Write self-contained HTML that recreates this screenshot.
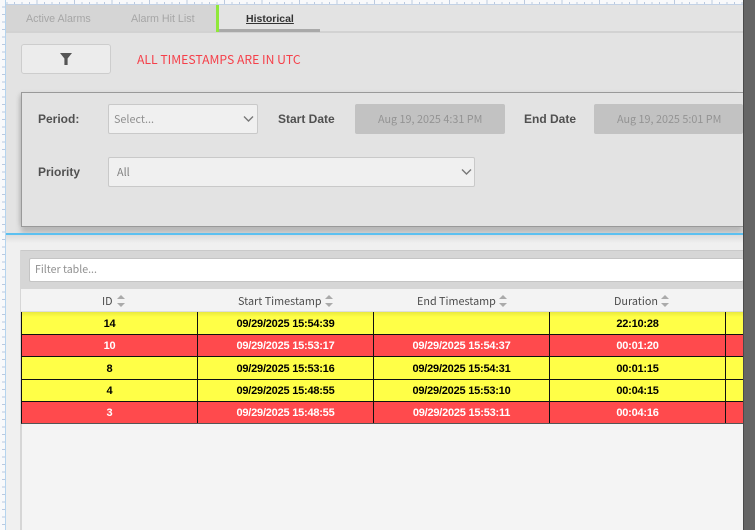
<!DOCTYPE html>
<html><head><meta charset="utf-8">
<style>
html,body{margin:0;padding:0;width:755px;height:530px;overflow:hidden;background:#f3f3f3}
.a{position:absolute;box-sizing:border-box}
.t{position:absolute;white-space:nowrap;line-height:1}
.n{font-family:"Noto Sans CJK SC","DejaVu Sans",sans-serif}
.l{font-family:"Liberation Sans",sans-serif}
.lab{font-family:"Liberation Sans",sans-serif;font-weight:700;font-size:12px;color:#505050}
.cell{position:absolute;text-align:center;font:700 11px/23px "Liberation Sans",sans-serif;letter-spacing:-.22px;height:22px;top:0}
.row{position:absolute;left:21px;width:722px;height:23px;box-sizing:border-box;border-bottom:1px solid #111;}
.y{background:#ffff47;color:#000}.r{background:#ff4a4d;color:#fff}
.v{position:absolute;top:0;height:100%;width:1px;background:#111}
.hd{position:absolute;top:295px;font:10.8px/12px "Noto Sans CJK SC",sans-serif;color:#4d4d4d;white-space:nowrap}
.lo .cell{line-height:24px}
</style></head>
<body>
<!-- top ruler -->
<div class="a" style="left:0;top:0;width:755px;height:5px;background:#f8f9fb"></div>
<div class="a" style="left:0;top:2px;width:755px;height:2px;background:repeating-linear-gradient(90deg,#f8f9fb 0,#f8f9fb 6.5px,#bccadf 6.5px,#bccadf 7.5px)"></div>
<div class="a" style="left:0;top:0;width:755px;height:4px;background:repeating-linear-gradient(90deg,transparent 0,transparent 36.5px,#bccadf 36.5px,#bccadf 37.5px)"></div>
<div class="a" style="left:0;top:4px;width:755px;height:1px;background:#c3d2e6"></div>
<!-- left ruler -->
<div class="a" style="left:0;top:0;width:5px;height:530px;background:#f8f9fb"></div>
<div class="a" style="left:2px;top:0;width:3px;height:530px;background:repeating-linear-gradient(180deg,#f8f9fb 0,#f8f9fb 6.5px,#b9c9e0 6.5px,#b9c9e0 7.5px)"></div>
<div class="a" style="left:5px;top:0;width:1px;height:530px;background:#b5d4ee"></div>
<!-- main bg -->
<div class="a" style="left:6px;top:5px;width:737px;height:228px;background:#e3e3e3"></div>
<!-- tabs -->
<div class="a" style="left:6px;top:5px;width:210px;height:26px;background:#d5d5d5"></div>
<div class="a" style="left:6px;top:31px;width:737px;height:2px;background:#d2d2d2"></div>
<div class="a" style="left:216px;top:5px;width:3px;height:27px;background:#8fe83a"></div>
<div class="a" style="left:219px;top:29px;width:101px;height:3px;background:#a9a9a9"></div>
<div class="t l" style="left:26px;top:14px;font-size:10.7px;color:#a6a6a6">Active Alarms</div>
<div class="t l" style="left:131px;top:14px;font-size:10.7px;color:#a6a6a6">Alarm Hit List</div>
<div class="t l" style="left:246px;top:14px;font-size:10.5px;font-weight:700;color:#333;text-decoration:underline">Historical</div>
<!-- filter btn -->
<div class="a" style="left:21px;top:44px;width:90px;height:30px;background:#ececec;border:1px solid #cdcdcd;border-radius:3px"></div>
<svg class="a" style="left:59px;top:52px" width="14" height="14" viewBox="0 0 14 14"><path d="M1 1H13L8.6 6.5V13H5.4V6.5Z" fill="#555"/></svg>
<div class="t n" style="left:137px;top:53px;font-size:12.2px;color:#f5404a">ALL TIMESTAMPS ARE IN UTC</div>
<!-- panel -->
<div class="a" style="left:21px;top:92px;width:722px;height:135px;background:#e3e3e3;border:1px solid #999;border-right:0;box-shadow:-3px 0 4px -2px #bbb,0 6px 5px #b9b9b9"></div>
<div class="t lab" style="left:38px;top:113px">Period:</div>
<div class="a" style="left:108px;top:104px;width:150px;height:30px;background:#f0f0f0;border:1px solid #c9c9c9;border-radius:2px"></div>
<div class="t n" style="left:114px;top:114px;font-size:10.8px;color:#909090">Select...</div>
<svg class="a" style="left:243px;top:115px" width="11" height="8" viewBox="0 0 11 8"><path d="M1 1.5L5.5 6L10 1.5" fill="none" stroke="#777" stroke-width="1.4"/></svg>
<div class="t lab" style="left:278px;top:113px">Start Date</div>
<div class="a" style="left:355px;top:104px;width:150px;height:30px;background:#c2c2c2;border-radius:2px"></div>
<div class="t n" style="left:378px;top:114px;font-size:10.8px;color:#939393">Aug 19, 2025 4:31 PM</div>
<div class="t lab" style="left:524px;top:113px">End Date</div>
<div class="a" style="left:594px;top:104px;width:149px;height:30px;background:#c2c2c2;border-radius:2px"></div>
<div class="t n" style="left:617px;top:114px;font-size:10.8px;color:#939393">Aug 19, 2025 5:01 PM</div>
<div class="t lab" style="left:38px;top:166px">Priority</div>
<div class="a" style="left:108px;top:157px;width:367px;height:30px;background:#f0f0f0;border:1px solid #c9c9c9;border-radius:2px"></div>
<div class="t n" style="left:117px;top:167px;font-size:10.8px;color:#808080">All</div>
<svg class="a" style="left:461px;top:168px" width="11" height="8" viewBox="0 0 11 8"><path d="M1 1.5L5.5 6L10 1.5" fill="none" stroke="#777" stroke-width="1.4"/></svg>
<!-- blue divider -->
<div class="a" style="left:6px;top:235px;width:737px;height:295px;background:#f0f0f0"></div>
<div class="a" style="left:6px;top:235px;width:737px;height:8px;background:linear-gradient(#dcdcdc,#f0f0f0)"></div>
<div class="a" style="left:6px;top:233px;width:737px;height:2px;background:#5cc0f0"></div>
<!-- table -->
<div class="a" style="left:20px;top:250px;width:723px;height:280px;background:#f4f4f4;border-left:2px solid #d6d6d6"></div>
<div class="a" style="left:21px;top:250px;width:722px;height:39px;background:#d6d6d6;border-top:1px solid #c9c9c9"></div>
<div class="a" style="left:29px;top:258px;width:714px;height:24px;background:#fff;border:1px solid #c4c4c4;border-right:0;border-radius:2px"></div>
<div class="t n" style="left:35px;top:265px;font-size:10.6px;color:#909090">Filter table...</div>
<div class="a" style="left:21px;top:289px;width:722px;height:23px;background:#f3f3f3;border-bottom:1px solid #ddd"></div>
<div class="hd" style="left:102px">ID</div>
<div class="hd" style="left:238px">Start Timestamp</div>
<div class="hd" style="left:417px">End Timestamp</div>
<div class="hd" style="left:614px">Duration</div>
<svg class="a" style="left:117px;top:295px" width="8" height="12" viewBox="0 0 8 12"><path d="M4 0L8 4H0Z" fill="#aaa"/><path d="M0 8H8L4 12Z" fill="#aaa"/></svg>
<svg class="a" style="left:325px;top:295px" width="8" height="12" viewBox="0 0 8 12"><path d="M4 0L8 4H0Z" fill="#aaa"/><path d="M0 8H8L4 12Z" fill="#aaa"/></svg>
<svg class="a" style="left:499px;top:295px" width="8" height="12" viewBox="0 0 8 12"><path d="M4 0L8 4H0Z" fill="#aaa"/><path d="M0 8H8L4 12Z" fill="#aaa"/></svg>
<svg class="a" style="left:661px;top:295px" width="8" height="12" viewBox="0 0 8 12"><path d="M4 0L8 4H0Z" fill="#aaa"/><path d="M0 8H8L4 12Z" fill="#aaa"/></svg>

<div class="row y lo" style="top:312px;height:23px;background:linear-gradient(#e9e93e,#ffff47 5px);border-left:1px solid #111">
<div class="cell" style="left:0;width:175px">14</div><div class="v" style="left:175px"></div>
<div class="cell" style="left:176px;width:175px">09/29/2025 15:54:39</div><div class="v" style="left:351px"></div>
<div class="v" style="left:527px"></div>
<div class="cell" style="left:528px;width:175px">22:10:28</div><div class="v" style="left:703px"></div>
</div>
<div class="row r" style="top:335px;height:22px;border-left:1px solid #111">
<div class="cell" style="left:0;width:175px">10</div><div class="v" style="left:175px"></div>
<div class="cell" style="left:176px;width:175px">09/29/2025 15:53:17</div><div class="v" style="left:351px"></div>
<div class="cell" style="left:352px;width:175px">09/29/2025 15:54:37</div><div class="v" style="left:527px"></div>
<div class="cell" style="left:528px;width:175px">00:01:20</div><div class="v" style="left:703px"></div>
</div>
<div class="row y lo" style="top:357px;border-left:1px solid #111">
<div class="cell" style="left:0;width:175px">8</div><div class="v" style="left:175px"></div>
<div class="cell" style="left:176px;width:175px">09/29/2025 15:53:16</div><div class="v" style="left:351px"></div>
<div class="cell" style="left:352px;width:175px">09/29/2025 15:54:31</div><div class="v" style="left:527px"></div>
<div class="cell" style="left:528px;width:175px">00:01:15</div><div class="v" style="left:703px"></div>
</div>
<div class="row y" style="top:380px;height:22px;border-left:1px solid #111">
<div class="cell" style="left:0;width:175px">4</div><div class="v" style="left:175px"></div>
<div class="cell" style="left:176px;width:175px">09/29/2025 15:48:55</div><div class="v" style="left:351px"></div>
<div class="cell" style="left:352px;width:175px">09/29/2025 15:53:10</div><div class="v" style="left:527px"></div>
<div class="cell" style="left:528px;width:175px">00:04:15</div><div class="v" style="left:703px"></div>
</div>
<div class="row r" style="top:402px;height:22px;border-left:1px solid #111;border-bottom:1px solid #555">
<div class="cell" style="left:0;width:175px">3</div><div class="v" style="left:175px"></div>
<div class="cell" style="left:176px;width:175px">09/29/2025 15:48:55</div><div class="v" style="left:351px"></div>
<div class="cell" style="left:352px;width:175px">09/29/2025 15:53:11</div><div class="v" style="left:527px"></div>
<div class="cell" style="left:528px;width:175px">00:04:16</div><div class="v" style="left:703px"></div>
</div>
<!-- right dark bar -->
<div class="a" style="left:743px;top:0;width:12px;height:530px;background:#656565;border-left:1px solid #4a4a4a"></div>
</body></html>
